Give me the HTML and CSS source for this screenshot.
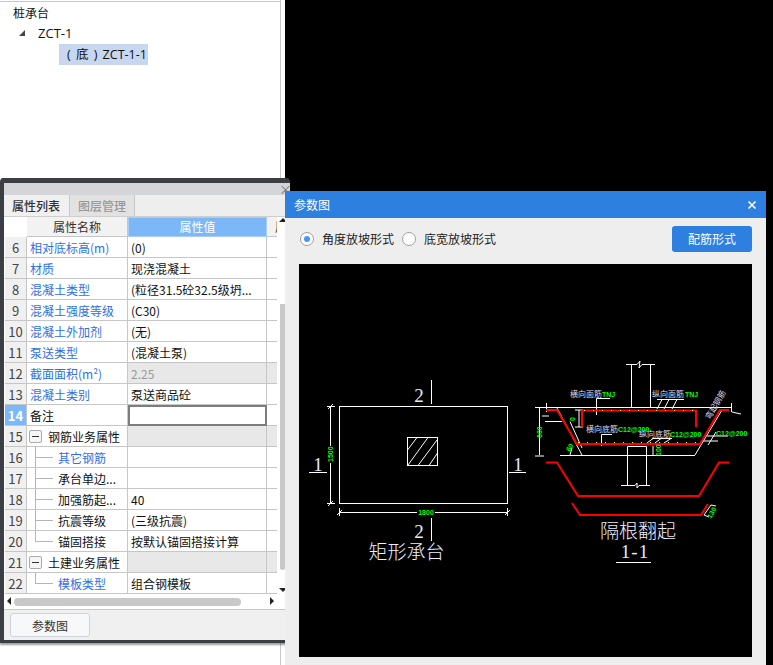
FILE: index.html
```html
<!DOCTYPE html>
<html lang="zh">
<head>
<meta charset="utf-8">
<title>参数图</title>
<link rel="stylesheet" href="styles.css">
</head>
<body>
<div class="desk">
  <aside class="tree">
    <div class="tree-root">桩承台</div>
    <div class="tree-node"><span class="tri"></span><span>ZCT-1</span></div>
    <div class="tree-leaf"><span class="leaf-sel">( 底 ) ZCT-1-1</span></div>
  </aside>

  <section class="panel">
    <div class="panel-title"><span class="panel-x">×</span></div>
    <div class="tabs">
      <div class="tab active">属性列表</div>
      <div class="tab">图层管理</div>
    </div>
    <div class="grid-wrap">
      <table class="props">
        <colgroup><col class="c-n"><col class="c-k"><col class="c-v"><col class="c-x"></colgroup>
        <thead>
          <tr><th class="corner"></th><th>属性名称</th><th class="hl">属性值</th><th class="clip"><span>属</span></th></tr>
        </thead>
        <tbody>
          <tr><td class="n">6</td><td class="k link">相对底标高(m)</td><td class="v">(0)</td><td></td></tr>
          <tr><td class="n">7</td><td class="k link">材质</td><td class="v">现浇混凝土</td><td></td></tr>
          <tr><td class="n">8</td><td class="k link">混凝土类型</td><td class="v">(粒径31.5砼32.5级坍...</td><td></td></tr>
          <tr><td class="n">9</td><td class="k link">混凝土强度等级</td><td class="v">(C30)</td><td></td></tr>
          <tr><td class="n">10</td><td class="k link">混凝土外加剂</td><td class="v">(无)</td><td></td></tr>
          <tr><td class="n">11</td><td class="k link">泵送类型</td><td class="v">(混凝土泵)</td><td></td></tr>
          <tr><td class="n">12</td><td class="k link">截面面积(m²)</td><td class="v off">2.25</td><td class="shade"></td></tr>
          <tr><td class="n">13</td><td class="k link">混凝土类别</td><td class="v">泵送商品砼</td><td></td></tr>
          <tr><td class="n cur">14</td><td class="k">备注</td><td class="v edit"></td><td></td></tr>
          <tr><td class="n">15</td><td class="k grp"><span class="box"></span>钢筋业务属性</td><td class="v shade"></td><td class="shade"></td></tr>
          <tr><td class="n">16</td><td class="k sub link">其它钢筋</td><td class="v"></td><td></td></tr>
          <tr><td class="n">17</td><td class="k sub">承台单边...</td><td class="v"></td><td></td></tr>
          <tr><td class="n">18</td><td class="k sub">加强筋起...</td><td class="v">40</td><td></td></tr>
          <tr><td class="n">19</td><td class="k sub">抗震等级</td><td class="v">(三级抗震)</td><td></td></tr>
          <tr><td class="n">20</td><td class="k sub end">锚固搭接</td><td class="v">按默认锚固搭接计算</td><td></td></tr>
          <tr><td class="n">21</td><td class="k grp"><span class="box"></span>土建业务属性</td><td class="v shade"></td><td class="shade"></td></tr>
          <tr><td class="n">22</td><td class="k sub end link">模板类型</td><td class="v">组合钢模板</td><td></td></tr>
        </tbody>
      </table>
      <div class="vbar">
        <span class="arrow up"></span>
        <span class="vthumb"></span>
        <span class="arrow down"></span>
      </div>
    </div>
    <div class="hbar">
      <span class="arrow left"></span>
      <span class="hthumb"></span>
      <span class="arrow right"></span>
    </div>
    <div class="panel-foot"><button class="foot-btn">参数图</button></div>
  </section>

  <section class="dialog">
    <header class="dlg-head">
      <span>参数图</span>
      <svg class="dlg-x" width="10" height="10" viewBox="0 0 10 10"><path d="M1.5 1.5L8.500 8.500M8.500 1.500L1.500 8.500" stroke="#fff" stroke-width="1.600"/></svg>
    </header>
    <div class="dlg-tools">
      <label class="radio on"><span class="dot"></span>角度放坡形式</label>
      <label class="radio"><span class="dot"></span>底宽放坡形式</label>
      <button class="primary">配筋形式</button>
    </div>
    <div class="canvas">
      <svg class="cad" width="453" height="393" viewBox="299 264 453 393">
        <!-- plan view -->
        <g class="w">
          <rect x="339.500" y="406.500" width="168" height="97"/>
          <rect x="407.500" y="437.500" width="30" height="28"/>
          <path d="M407.500 450L417 437.500M408 465L428 437.500M418 465.500L437 440M429 465.500L437.500 453"/>
          <path d="M330.500 406V446M330.500 463V503M327 406.500H335M327 503.500H335M328 409L333 404M328 506L333 501"/>
          <path d="M339.500 512.500H417M435 512.500H507.500M339.500 508V516M507.500 508V516M337 515L342 510M505 515L510 510"/>
          <path d="M431.500 380V404M431.500 518V541M309 472.500H327M509 472.500H526"/>
        </g>
        <text class="g t8" transform="translate(333 462) rotate(-90)">1500</text>
        <text class="g t8" x="426" y="515" text-anchor="middle">1800</text>
        <text class="big" x="419" y="402" text-anchor="middle">2</text>
        <text class="big" x="419" y="538" text-anchor="middle">2</text>
        <text class="big" x="318" y="471" text-anchor="middle">1</text>
        <text class="big" x="518" y="471" text-anchor="middle">1</text>
        <text class="title" x="406.500" y="559" text-anchor="middle">矩形承台</text>

        <!-- section view -->
        <g class="w">
          <path d="M631.500 407V364.500M650.500 407V364.500M626 364.500H637L640 361L639 368L642 364.500H655"/>
          <path d="M539 407.500H731M546.500 403V412M731.500 403V412"/>
          <path d="M557 408L582 455M722 410L695 455M560 455.500H695M545 421.500H562M570 421.500L582 448"/>
          <path d="M539.500 408V455M535 456H544M535 407.500H544M542 416H549M732 412L741 414"/>
          <path d="M579 410V427M575 410H583M575 427H583"/>
          <path d="M627.500 486V446.500H646.500V486M621 485.500H635L637 483L637 488L639 485.500H650"/>
          <path d="M596.500 415V398.500H610M657 409L662 399.500M664 409L669 399.500M672 409L677 399.500M657 399.500H684"/>
          <path d="M601.500 446V434.500H612M647 443L653 438.500M655 443L661 438.500M664 443L671 438.500M652 438.500H672"/>
          <path d="M653 446V455M570 455L572 448M707 436L728 436M702 441H718M708 445L716 432"/>
          <path d="M704 515L711 505M711 505L716 506M704 515L709 517"/>
          <path d="M616 562.500H651"/>
        </g>
        <g class="r">
          <path d="M582 427V410.500H696V427"/>
          <path d="M546 410H557L577 444H700L720 410H729"/>
          <path d="M546 462.500H557L578 496H699L719 462.500H729"/>
          <path d="M572 503L580 515H701L708 504"/>
        </g>
        <path class="y" d="M584 410.500H696M578 442.500H696"/>
        <text class="lab" x="570" y="397">横向面筋</text>
        <text class="g t8" x="602" y="397">TNJ</text>
        <text class="lab" x="652" y="397">纵向面筋</text>
        <text class="g t8" x="685" y="397">TNJ</text>
        <text class="lab" x="586" y="432">横向底筋</text>
        <text class="g t8" x="618" y="432">C12@200</text>
        <text class="lab" x="639" y="437">纵向底筋</text>
        <text class="g t8" x="670" y="437">C12@200</text>
        <text class="g t8" x="716" y="436">C12@200</text>
        <text class="lab" transform="translate(710 420) rotate(-60)">弯起钢筋</text>
        <text class="g t8" transform="translate(541.500 438) rotate(-90)">600</text>
        <text class="g t8" transform="translate(575 421) rotate(-90)">0</text>
        <text class="g t8" transform="translate(570 452) rotate(-60)">60</text>
        <text class="g t8" transform="translate(661 456) rotate(-90)">100</text>
        <text class="g t8" transform="translate(711 519) rotate(-60)">130</text>
        <text class="title" x="638" y="538" text-anchor="middle">隔根翻起</text>
        <text class="big wide" x="635" y="558" text-anchor="middle">1-1</text>
      </svg>
    </div>
  </section>
</div>
</body>
</html>
```

FILE: styles.css
```css
* { box-sizing: border-box; }
html, body { margin: 0; padding: 0; }
body {
  width: 773px;
  height: 665px;
  overflow: hidden;
  font-family: "Noto Sans CJK SC", "Liberation Sans", sans-serif;
  font-size: 12px;
  color: #111;
  background: #000;
}
.desk { position: relative; width: 773px; height: 665px; overflow: hidden; }

/* tree */
.tree {
  position: absolute; left: 0; top: 0;
  width: 285px; height: 665px;
  background: #fff;
  border-top: 2px solid transparent;
  padding-left: 13px;
  background-image: linear-gradient(#c8c8c8, #c8c8c8), linear-gradient(#c8c8c8, #c8c8c8);
  background-size: 1px 100%, 281px 1px;
  background-position: 280px 0, 0 1px;
  background-repeat: no-repeat;
  background-origin: border-box;
}
.tree-root { height: 21px; line-height: 21px; }
.tree-node {
  height: 20px; line-height: 20px; display: flex; align-items: center; margin-left: 6px; gap: 13px;
  font-family: "Open Sans", "Noto Sans CJK SC", sans-serif; font-size: 13px;
}
.tri {
  width: 0; height: 0;
  border-left: 6px solid transparent;
  border-bottom: 6px solid #444;
}
.tree-leaf { height: 21px; margin-left: 46px; margin-top: 1px; }
.leaf-sel {
  display: inline-block; width: 89px; height: 21px; line-height: 21px;
  background: #c6d7ef; padding-left: 8px; white-space: nowrap;
  font-family: "Open Sans", "Noto Sans CJK SC", sans-serif; font-size: 12.5px;
  word-spacing: 2px;
}

/* property panel */
.panel {
  position: absolute; left: 0; top: 178px;
  width: 290px; height: 465px;
  background: #eee;
  border: solid #3b3f44;
  border-width: 5px 0 3px 4px;
  border-radius: 4px 4px 0 0;
  box-shadow: 0 2px 2px rgba(60, 60, 60, .5);
}
.panel-title {
  height: 12px; background: #d3d5d8; position: relative;
}
.panel-x { position: absolute; left: 275px; top: -2px; font-size: 13px; line-height: 15px; color: #777; }
.tabs { display: flex; height: 22px; background: #eee; border-bottom: 1px solid #cfcfcf; }
.tab {
  width: 65px; text-align: center; line-height: 21px; font-size: 12px;
  color: #999; background: #e2e2e2; border-right: 1px solid #c8c8c8; font-weight: 500;
}
.tab.active { color: #333; background: #f0f0f0; width: 66px; padding-right: 1px; }

.grid-wrap { display: flex; height: 377px; background: #fff; }
.props {
  table-layout: fixed; width: 272px; height: 377px; margin-left: 1px;
  border-collapse: separate; border-spacing: 0;
}
.c-n { width: 22px; } .c-k { width: 101px; } .c-v { width: 139px; } .c-x { width: 10px; }
.props th, .props td {
  padding: 0; height: 21px;
  border-right: 1px solid #c6c6c6; border-bottom: 1px solid #c6c6c6;
  font-weight: 400; white-space: nowrap; overflow: hidden; line-height: 19px;
}
.props td:last-child, .props th:last-child { border-right: 0; }
.props th { height: 20px; background: #f2f2f2; text-align: center; font-size: 12px; color: #333; line-height: 18px; }
.props th.corner { background: #fff; border: 0; }
.props th.hl { background: #7cb8f7; color: #fff; border: 1px solid #a8cdf0; }
.props th.clip { text-align: left; }
.clip span { display: block; margin-left: 8px; }
.n { text-align: center; background: #f0f0f0; color: #444; font-size: 13px; }
.n.cur { background: #7cb8f7; color: #fff; font-weight: 700; }
.k { padding-left: 3px !important; }
.link { color: #2f6fe6; }
.v { padding-left: 3px !important; }
.off { background: #e8e8e8; color: #999; }
.shade { background: #e8e8e8; }
.props td.edit { border: 2px solid #7d7d7d; }
.grp { padding-left: 21px !important; position: relative; }
.box {
  position: absolute; left: 2px; top: 4px; width: 13px; height: 13px;
  border: 1px solid #aaa; border-radius: 2px; background: #f6f6f6;
}
.box::before { content: ""; position: absolute; left: 2px; top: 5px; width: 7px; height: 1px; background: #333; }
.sub { padding-left: 31px !important; position: relative; }
.sub::before { content: ""; position: absolute; left: 8px; top: 0; bottom: -1px; width: 1px; background: #b5b5b5; }
.sub::after { content: ""; position: absolute; left: 8px; top: 10px; width: 18px; height: 1px; background: #b5b5b5; }
.sub.end::before { bottom: 10px; }

.vbar { width: 8px; position: relative; display: flex; flex-direction: column; align-items: flex-end; }
.vthumb { width: 5px; height: 266px; margin-top: 87px; background: #c8c8c8; border-radius: 0 0 3px 3px; flex: none; }
.arrow { width: 0; height: 0; position: absolute; border: solid transparent; }
.arrow.up { left: 2px; top: 1px; border-width: 0 4px 4px 4px; border-bottom-color: #222; }
.arrow.down { left: 2px; bottom: 2px; border-width: 4px 4px 0 4px; border-top-color: #222; }

.hbar { height: 16px; position: relative; background: #fff; border-bottom: 1px solid #c8c8c8; margin-left: 0; }
.hthumb { position: absolute; left: 10px; top: 4px; width: 227px; height: 8px; background: #c8c8c8; border-radius: 4px; }
.arrow.left { left: 3px; top: 3px; border-width: 4px 4px 4px 0; border-right-color: #222; }
.arrow.right { left: 266px; top: 3px; border-width: 4px 0 4px 4px; border-left-color: #222; }

.panel-foot { padding: 3px 0 0 6px; background: #f0f0f0; height: 30px; }
.foot-btn {
  width: 80px; height: 24px; padding: 0;
  font: 12px "Noto Sans CJK SC", sans-serif; color: #333;
  background: #f7f8fa; border: 1px solid #cfd3da; border-radius: 3px;
}

/* dialog */
.dialog {
  position: absolute; left: 285px; top: 191px;
  width: 481px; height: 474px;
  background: #eee;
  display: flex; flex-direction: column;
}
.dlg-head {
  height: 27px; flex: none; background: #2d80e0; color: #fff;
  display: flex; align-items: center; justify-content: space-between;
  padding: 0 9px;
}
.dlg-x { display: block; }
.dlg-tools {
  display: flex; align-items: center; height: 46px; flex: none;
  padding: 0 14px 5px 15px; gap: 8px;
}
.radio { display: flex; align-items: center; gap: 8px; width: 94px; white-space: nowrap; color: #222; }
.dot {
  width: 14px; height: 14px; border-radius: 50%;
  background: #fff; border: 1px solid #a0a0a0; flex: none; position: relative;
}
.radio.on .dot::after {
  content: ""; position: absolute; left: 3px; top: 3px; width: 6px; height: 6px; border-radius: 50%; background: #4a96f5;
}
.primary {
  margin-left: auto; width: 80px; height: 26px; padding: 0;
  background: #2d80e0; color: #fff; border: 0; border-radius: 3px;
  font: 12px "Noto Sans CJK SC", sans-serif;
}
.canvas { margin: 0 14px; height: 393px; background: #000; flex: none; }
.cad { display: block; }
.w { fill: none; stroke: #fff; stroke-width: 1; }
.r { fill: none; stroke: #f00; stroke-width: 2; }
.y { fill: none; stroke: #ff0; stroke-width: 1; stroke-dasharray: 1 8; }
.g { fill: #0f0; }
.t8 { font-family: "Liberation Sans", sans-serif; font-size: 7px; font-weight: 700; }
.lab { fill: #dde; font-size: 8px; }
.big { fill: #e2ecfa; font-family: "Liberation Serif", serif; font-size: 19px; }
.big.wide { letter-spacing: 1px; }
.title { fill: #eef; font-size: 19px; font-weight: 300; }
```
